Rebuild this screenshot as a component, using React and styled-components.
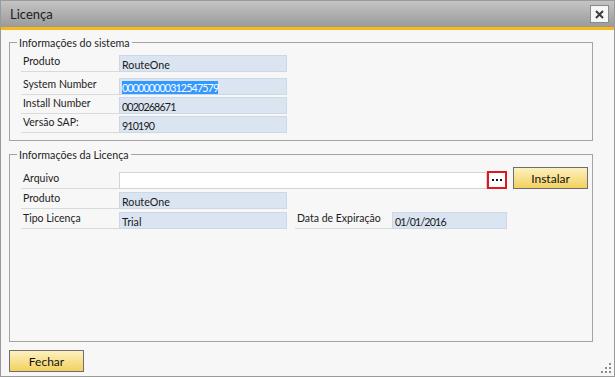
import React from 'react';
import styled, { createGlobalStyle } from 'styled-components';

const GlobalStyle = createGlobalStyle`
  html, body {
    margin: 0;
    padding: 0;
    background: #ffffff;
  }
  body {
    font-family: Lato, "Liberation Sans", sans-serif;
  }
`

const Window = styled.div`
  position: relative;
  width: 615px;
  height: 377px;
  box-sizing: border-box;
  border: 1px solid #9a9a9a;
  background: #f7f7f7;
  display: flex;
  flex-direction: column;
`
const TitleBar = styled.div`
  height: 26px;
  flex: none;
  background: linear-gradient(#c4c4c4, #9a9a9a);
  border-bottom: 3px solid #f7b91a;
  display: flex;
  align-items: center;
  justify-content: space-between;
  padding: 0 5px 0 9px;
`
const Title = styled.span`
  font-size: 13px;
  color: #1c1c1c;
`
const CloseButton = styled.div`
  width: 19px;
  height: 18px;
  box-sizing: border-box;
  border: 1px solid #8a8a8a;
  background: #f6f6f6;
  display: flex;
  align-items: center;
  justify-content: center;
`
const Body = styled.div`
  flex: 1;
  display: flex;
  flex-direction: column;
  padding: 6px 21px 4px 8px;
  min-height: 0;
`
const Group = styled.fieldset`
  margin: 0;
  padding: 0;
  min-width: 0;
  border: 1px solid #a3a3a3;
  flex: ${p => (p.$grow ? 1 : 'none')};
  & + & {
    margin-top: 7px;
  }
`
const Legend = styled.legend`
  margin-left: 7px;
  padding: 0 2px;
  font-size: 10.7px;
  line-height: 13px;
  color: #1e1e1e;
`
const Rows = styled.div`
  display: flex;
  flex-direction: column;
  padding: 6px 4px 7px 11px;
`
const Row = styled.div`
  display: flex;
  align-items: flex-end;
  margin-top: ${p => p.$gap || 0}px;
`
const Label = styled.div`
  width: ${p => p.$w || 98}px;
  height: 17px;
  box-sizing: border-box;
  padding-left: 2px;
  border-bottom: 1px solid #dadada;
  font-size: 10.5px;
  line-height: 13px;
  color: #222;
  margin-left: ${p => p.$ml || 0}px;
  white-space: nowrap;
`
const Field = styled.div`
  width: ${p => (p.$w ? `${p.$w}px` : 'auto')};
  flex: ${p => (p.$w ? 'none' : 1)};
  height: 17px;
  box-sizing: border-box;
  padding: 2px 2px 0;
  border: 1px solid ${p => (p.$white ? '#d4d4d4' : '#cdd8e6')};
  background: ${p => (p.$white ? '#ffffff' : '#dbe5f1')};
  font-size: 10.7px;
  line-height: 14px;
  letter-spacing: ${p => (p.$num ? '-0.85px' : '0')};
  color: #1a1a1a;
  white-space: nowrap;
  overflow: hidden;
`
const Selected = styled.span`
  background: #3399ff;
  color: #ffffff;
`
const BrowseButton = styled.div`
  width: 20px;
  height: 18px;
  box-sizing: border-box;
  border: 2px solid #e3151f;
  background: #ffffff;
  display: flex;
  align-items: center;
  justify-content: center;
`
const Button = styled.button`
  width: 75px;
  height: 22px;
  flex: none;
  margin-left: ${p => p.$ml || 0}px;
  border: 1px solid #6e6e6e;
  border-radius: 0;
  background: linear-gradient(#fcf1c0, #f3d15f);
  font-family: Lato, "Liberation Sans", sans-serif;
  font-size: 12px;
  color: #111;
  padding: 0;
`
const Footer = styled.div`
  display: flex;
  flex: none;
  padding-top: 8px;
`
const Grip = styled.svg`
  position: absolute;
  right: 2px;
  bottom: 2px;
`

const Dots = () => (
  <svg width="12" height="4" viewBox="0 0 12 4">
    <rect x="1" y="1" width="2" height="2" fill="#111" />
    <rect x="5" y="1" width="2" height="2" fill="#111" />
    <rect x="9" y="1" width="2" height="2" fill="#111" />
  </svg>
)

export default function App() {
  return (
    <Window>
      <GlobalStyle />
      <TitleBar>
        <Title>Licença</Title>
        <CloseButton>
          <svg width="9" height="9" viewBox="0 0 9 9">
            <path d="M1 1L8 8M8 1L1 8" stroke="#3c3c3c" strokeWidth="2" />
          </svg>
        </CloseButton>
      </TitleBar>
      <Body>
        <Group>
          <Legend>Informações do sistema</Legend>
          <Rows>
            <Row>
              <Label>Produto</Label>
              <Field $w={168}>RouteOne</Field>
            </Row>
            <Row $gap={6}>
              <Label>System Number</Label>
              <Field $w={168} $num><Selected>000000000312547579</Selected></Field>
            </Row>
            <Row $gap={2}>
              <Label>Install Number</Label>
              <Field $w={168} $num>0020268671</Field>
            </Row>
            <Row $gap={2}>
              <Label>Versão SAP:</Label>
              <Field $w={168} $num>910190</Field>
            </Row>
          </Rows>
        </Group>
        <Group $grow>
          <Legend>Informações da Licença</Legend>
          <Rows>
            <Row>
              <Label>Arquivo</Label>
              <Field $white />
              <BrowseButton><Dots /></BrowseButton>
              <Button $ml={6}>Instalar</Button>
            </Row>
            <Row $gap={3}>
              <Label>Produto</Label>
              <Field $w={168}>RouteOne</Field>
            </Row>
            <Row $gap={3}>
              <Label>Tipo Licença</Label>
              <Field $w={168}>Trial</Field>
              <Label $w={97} $ml={8}>Data de Expiração</Label>
              <Field $w={115} $num>01/01/2016</Field>
            </Row>
          </Rows>
        </Group>
        <Footer>
          <Button>Fechar</Button>
        </Footer>
      </Body>
      <Grip width="11" height="11" viewBox="0 0 11 11">
        <rect x="8" y="0" width="2" height="2" fill="#8c8c8c" />
        <rect x="4" y="4" width="2" height="2" fill="#8c8c8c" />
        <rect x="8" y="4" width="2" height="2" fill="#8c8c8c" />
        <rect x="0" y="8" width="2" height="2" fill="#8c8c8c" />
        <rect x="4" y="8" width="2" height="2" fill="#8c8c8c" />
        <rect x="8" y="8" width="2" height="2" fill="#8c8c8c" />
      </Grip>
    </Window>
  );
}
